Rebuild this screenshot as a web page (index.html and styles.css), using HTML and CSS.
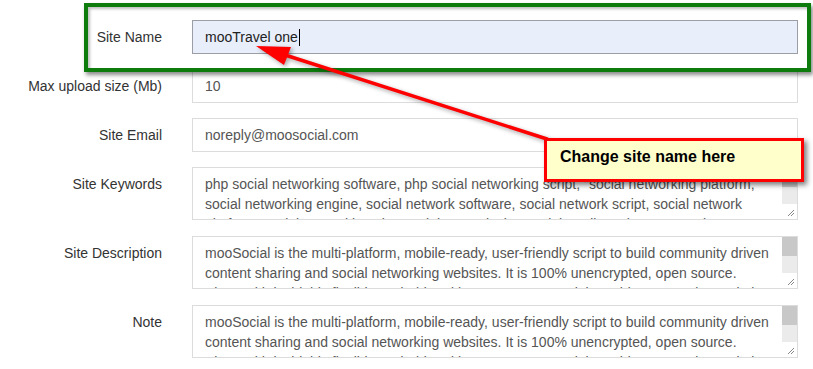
FILE: index.html
```html
<!DOCTYPE html>
<html lang="en">
<head>
    <meta charset="UTF-8">
    <meta name="viewport" content="width=device-width, initial-scale=1.0">
    <title>System Settings</title>
    <link rel="stylesheet" href="styles.css">
</head>
<body>
    <div class="settings">
        <form class="settings-form">
            <div class="form-row">
                <label class="form-label">Site Name</label>
                <div class="form-field field-focus">mooTravel one<span class="caret"></span></div>
            </div>
            <div class="form-row">
                <label class="form-label">Max upload size (Mb)</label>
                <input type="text" class="form-field" value="10">
            </div>
            <div class="form-row">
                <label class="form-label">Site Email</label>
                <input type="text" class="form-field" value="noreply@moosocial.com">
            </div>
            <div class="form-row row-tall">
                <label class="form-label">Site Keywords</label>
                <div class="form-field form-area">
                    <div class="area-text">php social networking software, php social networking script, "social networking platform, social networking engine, social network software, social network script, social network platform, social networking site, social network site, social media script, community software, online community, social community</div>
                    <div class="scrollbar">
                        <span class="scroll-thumb"></span>
                        <span class="scroll-track"></span>
                        <span class="scroll-grip">
                            <svg width="15" height="15" viewBox="0 0 15 15"><path d="M6 12 L12 6 M9 12 L12 9" stroke="#888" stroke-width="1"/></svg>
                        </span>
                    </div>
                </div>
            </div>
            <div class="form-row row-tall">
                <label class="form-label">Site Description</label>
                <div class="form-field form-area">
                    <div class="area-text">mooSocial is the multi-platform, mobile-ready, user-friendly script to build community driven content sharing and social networking websites. It is 100% unencrypted, open source. Along with its highly flexible Android and iOS apps, mooSocial provides a complete solution of social networking for your business.</div>
                    <div class="scrollbar">
                        <span class="scroll-thumb"></span>
                        <span class="scroll-track"></span>
                        <span class="scroll-grip">
                            <svg width="15" height="15" viewBox="0 0 15 15"><path d="M6 12 L12 6 M9 12 L12 9" stroke="#888" stroke-width="1"/></svg>
                        </span>
                    </div>
                </div>
            </div>
            <div class="form-row row-tall">
                <label class="form-label">Note</label>
                <div class="form-field form-area">
                    <div class="area-text">mooSocial is the multi-platform, mobile-ready, user-friendly script to build community driven content sharing and social networking websites. It is 100% unencrypted, open source. Along with its highly flexible Android and iOS apps, mooSocial provides a complete solution of social networking for your business.</div>
                    <div class="scrollbar">
                        <span class="scroll-thumb"></span>
                        <span class="scroll-track"></span>
                        <span class="scroll-grip">
                            <svg width="15" height="15" viewBox="0 0 15 15"><path d="M6 12 L12 6 M9 12 L12 9" stroke="#888" stroke-width="1"/></svg>
                        </span>
                    </div>
                </div>
            </div>
        </form>

        <!-- annotations drawn over the form -->
        <div class="highlight-box"></div>
        <svg class="arrow" width="813" height="369" viewBox="0 0 813 369">
            <line x1="282" y1="54" x2="547" y2="139" stroke="#f00" stroke-width="3.5" stroke-linecap="round"/>
            <polygon points="256,46 291,47 284,65" fill="#f00"/>
        </svg>
        <div class="callout">Change site name here</div>
    </div>
</body>
</html>
```

FILE: styles.css
```css
body {
    margin: 0;
    background-color: #fff;
    font-family: "Liberation Sans", Arial, sans-serif;
    font-size: 14px;
    color: #333;
}

.settings {
    position: relative;
    width: 813px;
    height: 369px;
    overflow: hidden;
}

.settings-form {
    display: flex;
    flex-direction: column;
    gap: 15px;
    padding-top: 20px;
}

.form-row {
    display: grid;
    grid-template-columns: 162px 606px;
    column-gap: 30px;
    align-items: start;
}

.row-tall + .row-tall {
    margin-top: 1px;
}

.form-label {
    text-align: right;
    line-height: 20px;
    padding-top: 7px;
    color: #333;
}

.form-field {
    box-sizing: border-box;
    height: 34px;
    margin: 0;
    padding: 0 12px;
    border: 1px solid #dcdcdc;
    background-color: #fff;
    font-family: "Liberation Sans", Arial, sans-serif;
    font-size: 14px;
    color: #555;
    outline: none;
}

.field-focus {
    display: flex;
    align-items: center;
    background-color: #e8eefa;
    border-color: #9b9ea5;
    color: #222;
}

.caret {
    display: inline-block;
    width: 1px;
    height: 17px;
    margin-left: 1px;
    background-color: #000;
}

.form-area {
    display: flex;
    height: 53px;
    padding: 0;
}

.area-text {
    flex: 1;
    padding: 6px 10px 0 12px;
    line-height: 20px;
    overflow: hidden;
}

.scrollbar {
    display: flex;
    flex-direction: column;
    width: 15px;
}

.scroll-thumb {
    height: 19px;
    background-color: #c8c8c8;
}

.scroll-track {
    flex: 1;
    background-color: #ebebeb;
}

.scroll-grip {
    height: 15px;
    background-color: #fff;
}

.scroll-grip svg {
    display: block;
}

.highlight-box {
    position: absolute;
    left: 84px;
    top: 3px;
    width: 727px;
    height: 69px;
    box-sizing: border-box;
    border: 4px solid #0d7c0d;
    box-shadow: 2px 3px 4px rgba(0, 0, 0, 0.45), inset 2px 2px 3px rgba(0, 0, 0, 0.25);
}

.arrow {
    position: absolute;
    left: 0;
    top: 0;
    filter: drop-shadow(2px 2px 2px rgba(0, 0, 0, 0.35));
}

.callout {
    position: absolute;
    left: 544px;
    top: 138px;
    width: 260px;
    height: 44px;
    box-sizing: border-box;
    padding: 7px 0 0 13px;
    border: 3px solid #f00;
    background-color: #ffffcc;
    box-shadow: 3px 3px 5px rgba(0, 0, 0, 0.5);
    font-size: 16px;
    font-weight: bold;
    color: #000;
}
```
